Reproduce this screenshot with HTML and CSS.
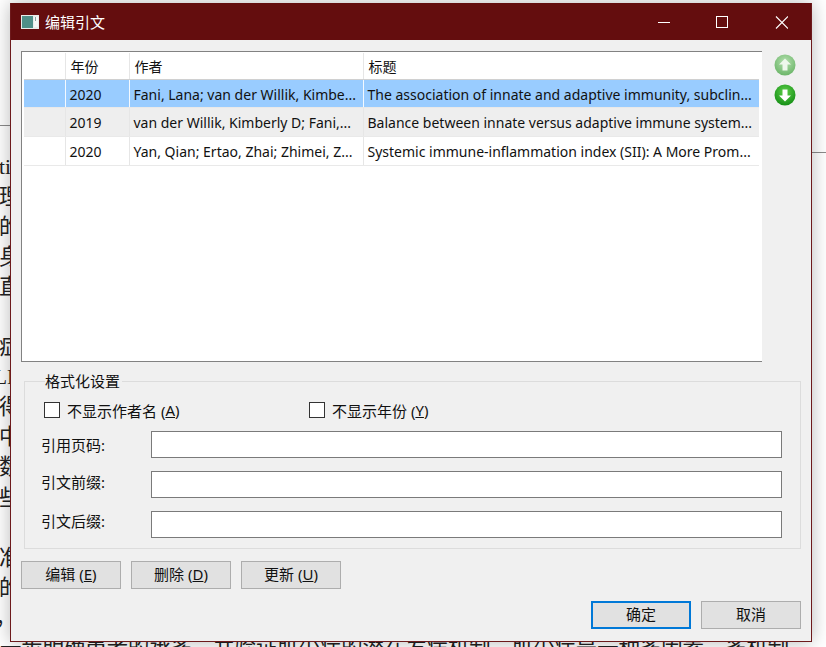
FILE: index.html
```html
<!DOCTYPE html>
<html lang="zh-CN">
<head>
  <meta charset="UTF-8">
  <title>编辑引文</title>
  <link rel="stylesheet" href="styles.css">
</head>
<body>
  <!-- document behind the dialog -->
  <div class="doc">
    <div class="rule rule-left"></div>
    <div class="rule rule-right"></div>
    <div class="doc-line">ti</div>
    <div class="doc-line">理</div>
    <div class="doc-line">的</div>
    <div class="doc-line">身</div>
    <div class="doc-line">直</div>
    <div class="doc-line">&nbsp;</div>
    <div class="doc-line">症</div>
    <div class="doc-line doc-latin">LE</div>
    <div class="doc-line">得</div>
    <div class="doc-line">中</div>
    <div class="doc-line">数</div>
    <div class="doc-line">些</div>
    <div class="doc-line">&nbsp;</div>
    <div class="doc-line">准</div>
    <div class="doc-line">的</div>
    <div class="doc-line doc-comma">，</div>
    <div class="doc-line doc-full">一步明确患者的承多，并验证肌少症的潜在发病机制，肌少症是一种多因素、多机制</div>
  </div>

  <div class="window">
    <div class="titlebar">
      <svg class="app-icon" width="18" height="14" viewBox="0 0 18 14">
        <rect x="0" y="0" width="18" height="14" fill="#e8ecea"/>
        <rect x="1" y="1" width="11" height="12" fill="#4f8f88"/>
        <rect x="13" y="2" width="4" height="10" fill="#f4f6f5"/>
        <rect x="14" y="2" width="1" height="4" fill="#8aa09c"/>
      </svg>
      <span class="title">编辑引文</span>
      <div class="controls">
        <svg width="14" height="14" viewBox="0 0 14 14"><path d="M2 7.5H14" stroke="#fff" fill="none"/></svg>
        <svg width="14" height="14" viewBox="0 0 14 14"><rect x="1.5" y="1.5" width="11" height="11" stroke="#fff" fill="none"/></svg>
        <svg width="14" height="14" viewBox="0 0 14 14"><path d="M2 1.5L14 13.5M14 1.5L2 13.5" stroke="#fff" stroke-width="1.1" fill="none"/></svg>
      </div>
    </div>

    <div class="content">
      <div class="list-area">
        <div class="list">
          <table class="cites">
            <colgroup>
              <col class="col-mark"><col class="col-year"><col class="col-author"><col class="col-title">
            </colgroup>
            <tr class="head"><th></th><th>年份</th><th>作者</th><th>标题</th></tr>
            <tr class="selected"><td></td><td>2020</td><td>Fani, Lana; van der Willik, Kimbe...</td><td>The association of innate and adaptive immunity, subclin...</td></tr>
            <tr class="alt"><td></td><td>2019</td><td>van der Willik, Kimberly D; Fani,...</td><td>Balance between innate versus adaptive immune system...</td></tr>
            <tr><td></td><td>2020</td><td>Yan, Qian; Ertao, Zhai; Zhimei, Z...</td><td>Systemic immune-inflammation index (SII): A More Prom...</td></tr>
          </table>
        </div>
        <div class="move-btns">
          <svg width="22" height="22" viewBox="0 0 22 22">
            <defs>
              <radialGradient id="ballUp" cx="50%" cy="35%" r="70%"><stop offset="0" stop-color="#b5e0b0"/><stop offset="1" stop-color="#66b263"/></radialGradient>
              <radialGradient id="ballDown" cx="50%" cy="35%" r="70%"><stop offset="0" stop-color="#5fd04a"/><stop offset="1" stop-color="#108a12"/></radialGradient>
            </defs>
            <circle cx="11" cy="11" r="10.5" fill="url(#ballUp)"/>
            <path d="M11 4.5L17 10.5H13.5V16.5H8.5V10.5H5Z" fill="#eef8ec"/>
          </svg>
          <svg width="22" height="22" viewBox="0 0 22 22">
            <circle cx="11" cy="11" r="10.5" fill="url(#ballDown)"/>
            <path d="M11 17.5L17 11.5H13.5V5.5H8.5V11.5H5Z" fill="#fff"/>
          </svg>
        </div>
      </div>

      <div class="group">
        <span class="group-title">格式化设置</span>
        <div class="checks">
          <label class="check check-author"><span class="box"></span>不显示作者名 (<u>A</u>)</label>
          <label class="check"><span class="box"></span>不显示年份 (<u>Y</u>)</label>
        </div>
        <div class="fields">
          <span>引用页码:</span><div class="input"></div>
          <span class="label-prefix">引文前缀:</span><div class="input"></div>
          <span class="label-suffix">引文后缀:</span><div class="input"></div>
        </div>
      </div>

      <div class="btn-row">
        <button class="btn">编辑 (<u>E</u>)</button>
        <button class="btn">删除 (<u>D</u>)</button>
        <button class="btn">更新 (<u>U</u>)</button>
      </div>
      <div class="btn-row footer">
        <button class="btn default">确定</button>
        <button class="btn">取消</button>
      </div>
    </div>
  </div>
</body>
</html>
```

FILE: styles.css
```css
html, body {
  margin: 0;
  padding: 0;
  height: 100%;
  overflow: hidden;
  background: #fff;
}
body {
  position: relative;
  font-family: "Noto Sans", "Noto Sans CJK SC", sans-serif;
  font-size: 14px;
  color: #111;
}

/* document behind */
.doc {
  position: absolute;
  inset: 0;
  overflow: hidden;
  padding-top: 125px;
  font-family: "Liberation Serif", "Noto Sans CJK SC", serif;
  font-size: 21.33px;
  color: #222;
}
.rule {
  height: 1px;
  background: #8a8a8a;
}
.rule-left {
  width: 10px;
}
.rule-right {
  margin: 26px 0 -1px 811px;
}
.doc-line {
  height: 30.05px;
  line-height: 30px;
  margin-left: -1px;
  white-space: nowrap;
}
.doc-latin {
  margin-left: -6px;
}
.doc-comma {
  margin-left: -5px;
}
.doc-full {
  margin-left: 0;
}

/* dialog window */
.window {
  position: absolute;
  left: 10px;
  top: 3px;
  width: 800px;
  height: 637px;
  border: 1px solid #6d1a1c;
  background: #f0f0f0;
  box-shadow: 0 0 18px rgba(0, 0, 0, 0.28);
}
.titlebar {
  display: flex;
  align-items: center;
  height: 37px;
  margin-top: -1px;
  padding-left: 10px;
  background: #640d0e;
  color: #fff;
}
.app-icon {
  margin-right: 6px;
}
.title {
  font-size: 15px;
}
.controls {
  display: flex;
  gap: 45px;
  margin-left: auto;
  margin-right: 23px;
}

.content {
  padding: 11px 10px 0 10px;
}
.list-area {
  display: flex;
}
.list {
  box-sizing: border-box;
  width: 741px;
  height: 311px;
  padding: 1px 2px 0 2px;
  background: #fff;
  border-top: 1px solid #828282;
  border-left: 1px solid #828282;
  border-bottom: 1px solid #828282;
}
.cites {
  table-layout: fixed;
  width: 735px;
  border-collapse: collapse;
}
.col-mark { width: 41px; }
.col-year { width: 64px; }
.col-author { width: 234px; }
.col-title { width: 396px; }
.cites th, .cites td {
  padding: 0 0 0 4px;
  font-weight: normal;
  text-align: left;
  white-space: nowrap;
  overflow: hidden;
  border-right: 1px solid #e6e6e6;
}
.cites th:last-child, .cites td:last-child {
  border-right: none;
}
.head th {
  height: 26px;
  padding-left: 5px;
  border-bottom: 1px solid #d0d0d0;
}
.cites td {
  height: 28px;
  border-bottom: 1px solid #e9e9e9;
}
.selected td {
  height: 26px;
  padding-top: 1px;
  background: #99ccff;
  border-right-color: #f4f9ff;
}
.alt td {
  background: #eeeeee;
}
.move-btns {
  display: flex;
  flex-direction: column;
  gap: 8px;
  margin: 3px 0 0 12px;
}

/* formatting group */
.group {
  position: relative;
  box-sizing: border-box;
  width: 777px;
  height: 168px;
  margin: 19px 0 0 3px;
  padding: 20px 18px 0 19px;
  border: 1px solid #dcdcdc;
}
.group-title {
  position: absolute;
  left: 20px;
  top: -12px;
  font-size: 15px;
  padding-right: 2px;
  background: #f0f0f0;
}
.checks {
  display: flex;
  height: 16px;
  align-items: center;
  font-size: 15px;
}
.check {
  display: flex;
  align-items: center;
  white-space: pre;
}
.check-author {
  width: 265px;
}
.box {
  box-sizing: border-box;
  width: 16px;
  height: 16px;
  margin-right: 7px;
  background: #fff;
  border: 1px solid #333;
}
.fields {
  display: grid;
  grid-template-columns: 110px 631px;
  grid-auto-rows: 27px;
  row-gap: 13px;
  align-items: center;
  margin: 13px 0 0 -3px;
  font-size: 15px;
}
.label-prefix {
  margin-bottom: 6px;
}
.label-suffix {
  margin-bottom: 8px;
}
.input {
  box-sizing: border-box;
  height: 27px;
  background: #fff;
  border: 1px solid #7a7a7a;
}

/* buttons */
.btn-row {
  display: flex;
  gap: 10px;
  margin-top: 12px;
}
.footer {
  justify-content: flex-end;
}
.btn {
  box-sizing: border-box;
  width: 100px;
  height: 28px;
  padding: 0 0 3px;
  background: #e1e1e1;
  border: 1px solid #adadad;
  font: inherit;
  font-size: 15px;
  color: #111;
}
.default {
  border: 2px solid #0078d7;
}
```
